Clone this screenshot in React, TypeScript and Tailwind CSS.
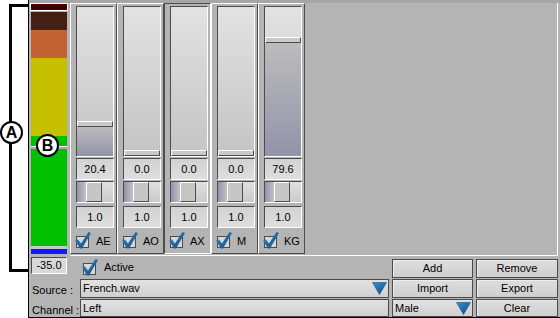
import React from 'react';

type Channel = { name: string; level: number; gain: string; selected?: boolean };

const channels: Channel[] = [
  { name: 'AE', level: 20.4, gain: '1.0' },
  { name: 'AO', level: 0, gain: '1.0' },
  { name: 'AX', level: 0, gain: '1.0', selected: true },
  { name: 'M', level: 0, gain: '1.0' },
  { name: 'KG', level: 79.6, gain: '1.0' },
];

const sunken = 'border border-t-[#4c4c4c] border-l-[#4c4c4c] border-r-white border-b-white';
const raised = 'border border-t-white border-l-white border-r-[#4c4c4c] border-b-[#4c4c4c]';

function CheckBox() {
  return (
    <svg width="16" height="17" viewBox="0 0 16 17" className="shrink-0">
      <defs>
        <linearGradient id="chk" x1="0" y1="0" x2="1" y2="1">
          <stop offset="0" stopColor="#3b86c2" />
          <stop offset="1" stopColor="#0f4b7e" />
        </linearGradient>
      </defs>
      <rect x="1.5" y="4.5" width="12" height="11" fill="#d8d8d8" stroke="#4c4c4c" />
      <polygon points="0,8.5 3,7.5 6,11.5 13.5,0 16,1 7,16.5 5,16.5" fill="url(#chk)" />
    </svg>
  );
}

function Arrow() {
  return (
    <svg width="15" height="13" viewBox="0 0 15 13" className="shrink-0">
      <defs>
        <linearGradient id="tri" x1="0" y1="0" x2="1" y2="1">
          <stop offset="0" stopColor="#3a92d4" />
          <stop offset="1" stopColor="#0a4a80" />
        </linearGradient>
      </defs>
      <polygon points="0.5,0.5 14.5,0.5 7.5,12.5" fill="url(#tri)" stroke="#1c4f78" strokeWidth="0.6" />
    </svg>
  );
}

function Strip({ ch }: { ch: Channel }) {
  const thumbTop = Math.round(143 - ch.level * 1.42);
  return (
    <div className={`w-[47px] h-[251px] flex flex-col pl-[5px] pt-[2px] ${ch.selected ? sunken : raised}`}>
      <div className={`relative w-[38px] h-[151px] bg-linear-to-b from-[#e2e2e2] to-[#c4c4c4] ${sunken}`}>
        <div
          className="absolute left-0 right-0 bottom-0 bg-linear-to-b from-[#bcbcbc] to-[#9393a9]"
          style={{ top: thumbTop + 6 }}
        />
        <div className={`absolute left-0 right-0 h-[6px] bg-[#c9c9c9] ${raised}`} style={{ top: thumbTop }} />
      </div>
      <div className={`mt-[1px] w-[38px] h-[22px] flex items-center justify-center bg-linear-to-b from-[#d2d2d2] to-[#dedede] ${sunken}`}>
        {ch.level.toFixed(1)}
      </div>
      <div className={`relative mt-[1px] w-[38px] h-[22px] bg-linear-to-b from-[#e0e0e0] to-[#cacaca] ${sunken}`}>
        <div className="absolute left-0 top-0 bottom-0 w-[10px] bg-linear-to-r from-[#9393a9] to-[#c8c8cc]" />
        <div className={`absolute left-[9px] top-0 bottom-0 w-[16px] bg-[#c6c6c6] ${raised}`} />
      </div>
      <div className={`mt-[3px] w-[38px] h-[22px] flex items-center justify-center bg-linear-to-b from-[#d2d2d2] to-[#dedede] ${sunken}`}>
        {ch.gain}
      </div>
      <div className="h-[25px] flex items-center -ml-[1px]">
        <CheckBox />
        <span className="ml-[5px] mt-[1px]">{ch.name}</span>
      </div>
    </div>
  );
}

function Button({ label, w }: { label: string; w: string }) {
  return (
    <div
      className={`${w} h-full flex items-center justify-center border border-[#4a4a4a] bg-linear-to-b from-[#dedede] to-[#cfcfcf] shadow-[inset_1px_1px_0_#eeeeee]`}
    >
      {label}
    </div>
  );
}

function Field({ text, arrow, w }: { text: string; arrow?: boolean; w: string }) {
  return (
    <div
      className={`${w} h-full flex items-center justify-between pl-[2px] pr-[1px] border border-[#4a4a4a] bg-linear-to-b from-[#e2e2e2] to-[#d0d0d0]`}
    >
      <span>{text}</span>
      {arrow && <Arrow />}
    </div>
  );
}

export default function App() {
  return (
    <div className="relative w-[560px] h-[318px] bg-white flex overflow-hidden text-[11px] leading-[13px] text-black font-['Liberation_Sans',Arial,sans-serif]">
      <div className="w-[28px] shrink-0" />

      <div className="flex-1 flex flex-col bg-[#b4b4b4] border-l border-b border-black">
        <div className="h-[3px] bg-[#a6a6a6]" />

        {/* meter + channel strips */}
        <div className="h-[253px] flex">
          <div className="w-[41px] pl-[1px] flex flex-col">
            <div className="w-[38px] h-[8px] border border-white bg-[#400000]" />
            <div className="relative ml-[1px] mt-[1px] w-[36px] flex flex-col">
              <div className="h-[18px] bg-[#432112]" />
              <div className="h-[28px] bg-[#c26232]" />
              <div className="h-[78px] bg-[#c6c000]" />
              <div className="h-[110px] bg-[#00c000]" />
              <div className="h-[3px] bg-[#c8c8c8]" />
              <div className="h-[5px] bg-[#0a1cf4]" />
              <div className="absolute left-0 right-0 top-[134px] h-[3px] bg-[#a9a9a9] border-t border-white" />
            </div>
          </div>
          <div className="w-[488px] flex border-r border-b border-white">
            {channels.map((ch) => (
              <Strip key={ch.name} ch={ch} />
            ))}
          </div>
        </div>

        {/* level + active + add/remove */}
        <div className="h-[23px] flex items-start">
          <div className={`ml-[2px] mt-[1px] w-[36px] h-[17px] flex items-center justify-center bg-[#d8d8d8] ${sunken}`}>
            -35.0
          </div>
          <div className="ml-[15px] mt-[3px]">
            <CheckBox />
          </div>
          <span className="ml-[6px] mt-[5px]">Active</span>
          <div className="flex-1" />
          <div className="mt-[3px] h-[19px] flex gap-[3px] mr-[2px]">
            <Button label="Add" w="w-[81px]" />
            <Button label="Remove" w="w-[82px]" />
          </div>
        </div>

        {/* source row */}
        <div className="h-[20px] flex items-start">
          <span className="w-[51px] pl-[3px] pt-[5px]">Source :</span>
          <div className="h-[19px] w-[309px] flex">
            <Field text="French.wav" arrow w="w-full" />
          </div>
          <div className="flex-1" />
          <div className="h-[19px] flex gap-[3px] mr-[2px]">
            <Button label="Import" w="w-[81px]" />
            <Button label="Export" w="w-[82px]" />
          </div>
        </div>

        {/* channel row */}
        <div className="h-[18px] flex items-start">
          <span className="w-[51px] pl-[3px] pt-[5px]">Channel :</span>
          <div className="h-[18px] w-[309px] flex">
            <Field text="Left" w="w-full" />
          </div>
          <div className="flex-1" />
          <div className="h-[18px] flex gap-[3px] mr-[2px]">
            <Field text="Male" arrow w="w-[81px]" />
            <Button label="Clear" w="w-[82px]" />
          </div>
        </div>
      </div>

      {/* annotation bracket and callouts */}
      <div className="absolute left-[9px] top-[4px] w-[19px] h-[268px] border-l-[3px] border-t-[3px] border-b-[3px] border-black" />
      <div className="absolute left-0 top-[121px] w-[23px] h-[23px] rounded-full border-2 border-black bg-white flex items-center justify-center text-[16px] leading-none font-bold">
        A
      </div>
      <div className="absolute left-[36px] top-[134px] w-[23px] h-[23px] rounded-full border-2 border-black bg-white flex items-center justify-center text-[16px] leading-none font-bold">
        B
      </div>
    </div>
  );
}
